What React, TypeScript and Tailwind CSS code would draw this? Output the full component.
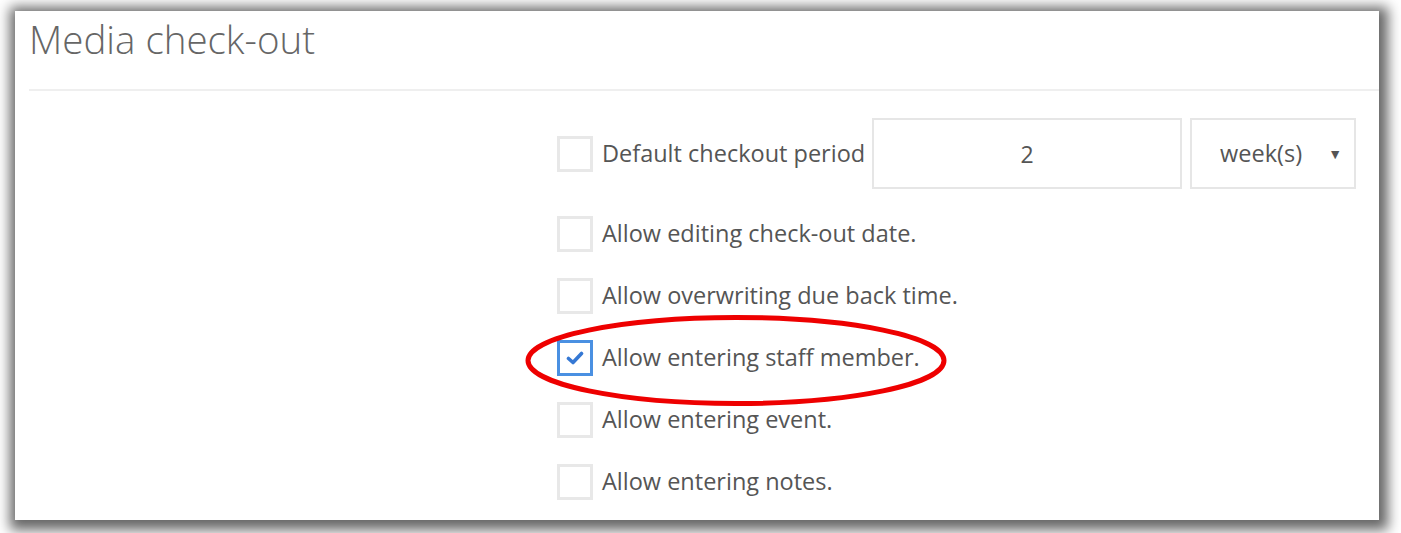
import React, { useState } from 'react';

// Media check-out settings panel (annotated screenshot)

type Opt = { key: string; label: string };

const OPTIONS: Opt[] = [
  { key: 'editDate', label: 'Allow editing check-out date.' },
  { key: 'overwriteDue', label: 'Allow overwriting due back time.' },
  { key: 'staff', label: 'Allow entering staff member.' },
  { key: 'event', label: 'Allow entering event.' },
  { key: 'notes', label: 'Allow entering notes.' },
];

const Check: React.FC<{ on: boolean; onClick: () => void }> = ({ on, onClick }) => (
  <button
    type="button"
    onClick={onClick}
    className={
      'w-[36px] h-[36px] shrink-0 flex items-center justify-center bg-white border-[3px] ' +
      (on ? 'border-[#4a90e2]' : 'border-[#e8e8e8]')
    }
  >
    {on && (
      <svg width="18" height="14" viewBox="0 0 18 14">
        <path d="M2.5 7.5 L7 11.5 L15.5 2.5" fill="none" stroke="#3578d4" strokeWidth="3.6" strokeLinecap="round" strokeLinejoin="round" />
      </svg>
    )}
  </button>
);

export default function App() {
  const [checked, setChecked] = useState<Record<string, boolean>>({ staff: true });
  const [period, setPeriod] = useState('2');
  const toggle = (k: string) => setChecked(c => ({ ...c, [k]: !c[k] }));

  return (
    <div className="relative w-[1401px] h-[533px] bg-white overflow-hidden" style={{ fontFamily: '"Open Sans", "Noto Sans", sans-serif' }}>
      <div className="ml-[15px] mt-[11px] w-[1364px] h-[509px] bg-white shadow-[2px_3px_12px_7px_rgba(0,0,0,0.6)]">
        <h1 className="pl-[14px] pt-[9px] h-[78px] text-[38.5px] leading-none font-light text-[#666]">Media check-out</h1>
        <div className="ml-[14px] border-t-2 border-[#efefef]" />

        <div className="pl-[542px] pt-[27px] pr-[23px] flex flex-col gap-[27px] text-[23.5px] text-[#555]">
          <div className="flex items-center h-[71px]">
            <Check on={!!checked.period} onClick={() => toggle('period')} />
            <span className="ml-[9px] mr-[7px] whitespace-nowrap">Default checkout period</span>
            <input
              value={period}
              onChange={e => setPeriod(e.target.value)}
              className="w-[310px] h-[71px] border-2 border-[#e6e6e6] text-center text-[23px] text-[#555] outline-none"
            />
            <div className="ml-[8px] w-[166px] h-[71px] border-2 border-[#e6e6e6] flex items-center pl-[28px] pr-[12px] text-[23.5px]">
              <span className="flex-1">week(s)</span>
              <span className="text-[14px] text-[#555]">▼</span>
            </div>
          </div>

          {OPTIONS.map(o => (
            <div key={o.key} className="flex items-center h-[35px]">
              <Check on={!!checked[o.key]} onClick={() => toggle(o.key)} />
              <span className="ml-[9px] whitespace-nowrap">{o.label}</span>
            </div>
          ))}
        </div>
      </div>

      {/* red annotation circle */}
      <svg className="absolute left-0 top-0 pointer-events-none" width="1401" height="533">
        <ellipse cx="736" cy="360.5" rx="208" ry="43" fill="none" stroke="#ee0000" strokeWidth="5" />
      </svg>
    </div>
  );
}
